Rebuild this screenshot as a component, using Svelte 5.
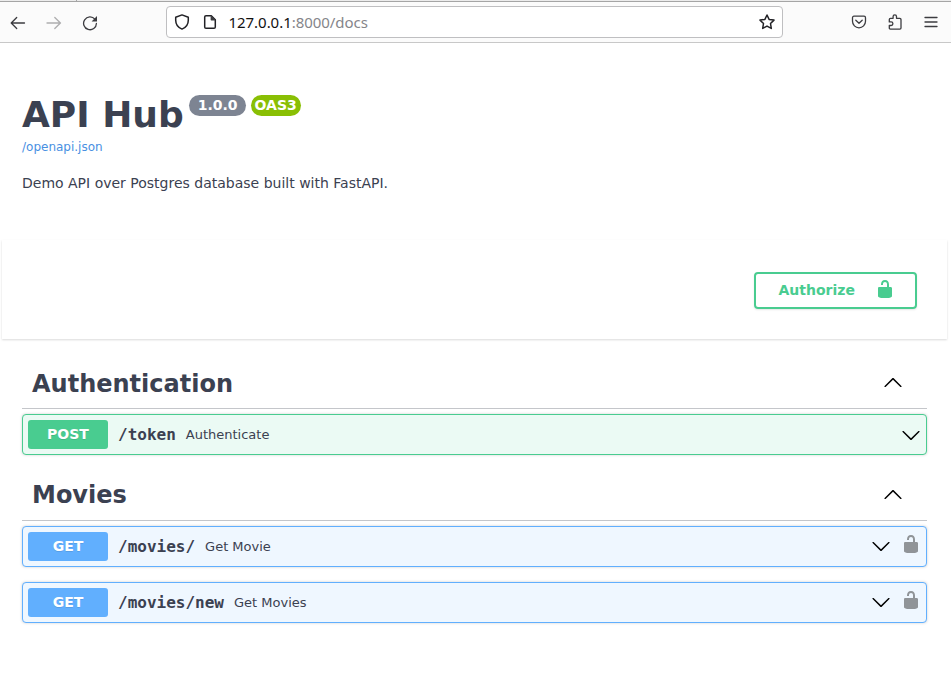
<script>
  const sections = [
    { name: 'Authentication', ops: [{ method: 'POST', path: '/token', summary: 'Authenticate', locked: false }] },
    {
      name: 'Movies',
      ops: [
        { method: 'GET', path: '/movies/', summary: 'Get Movie', locked: true },
        { method: 'GET', path: '/movies/new', summary: 'Get Movies', locked: true },
      ],
    },
  ];
</script>

{#snippet lock()}
  <svg class="lock" viewBox="0 0 20 20" width="20" height="20"><path fill="currentColor" d="M15.8 8H14V5.6C14 2.703 12.665 1 10 1 7.334 1 6 2.703 6 5.6V6h2v-.801C8 3.754 8.797 3 10 3c1.203 0 2 .754 2 2.199V8H4c-.553 0-1 .646-1 1.199V17c0 .549.428 1.139.951 1.307l1.197.387C5.672 18.861 6.55 19 7.1 19h5.8c.549 0 1.428-.139 1.951-.307l1.196-.387c.524-.167.953-.757.953-1.306V9.199C17 8.646 16.352 8 15.8 8z" /></svg>
{/snippet}

{#snippet arrow(up)}
  <svg class="arrow" class:up viewBox="0 0 20 20" width="20" height="20"><path d="M17.418 6.109c.272-.268.709-.268.979 0s.271.701 0 .969l-7.908 7.83c-.27.268-.707.268-.979 0l-7.908-7.83c-.27-.268-.27-.701 0-.969.271-.268.709-.268.979 0L10 13.25l7.418-7.141z" /></svg>
{/snippet}

<div class="page">
  <header class="toolbar">
    <nav>
      <svg viewBox="0 0 16 16" width="16" height="16"><path d="M14.5 8H1.5M6.7 2.5 1.2 8l5.5 5.5" /></svg>
      <svg class="disabled" viewBox="0 0 16 16" width="16" height="16"><path d="M1 8h13.5M8.8 2.5 14.4 8l-5.6 5.5" /></svg>
      <svg viewBox="0 0 16 16" width="16" height="16"><path d="M12.9 4.2A6.4 6.4 0 1 0 14.4 8.4" /><path class="solid" d="M15 1v5.4H9.6z" /></svg>
    </nav>
    <div class="urlbar">
      <svg viewBox="0 0 16 16" width="16" height="16"><path d="M8 .9 14.3 3.3v2.9c0 4.2-2.4 7.3-6.3 8.9-3.9-1.6-6.3-4.7-6.3-8.9V3.3z" /></svg>
      <svg class="doc" viewBox="0 0 16 16" width="16" height="16"><path d="M4 1.8h5.3l4 4v7.1c0 .8-.5 1.3-1.3 1.3H4c-.8 0-1.3-.5-1.3-1.3V3.1c0-.8.5-1.3 1.3-1.3z" /><path class="solid" d="M8.6 1.5v4c0 .6.4 1 1 1h4z" /></svg>
      <span class="url"><b>127.0.0.1</b>:8000/docs</span>
      <svg class="star" viewBox="0 0 16 16" width="16" height="16"><path d="m8 1 2.1 4.4 4.9.7-3.5 3.4.8 4.9L8 12.1l-4.3 2.3.8-4.9L1 6.1l4.9-.7z" /></svg>
    </div>
    <div class="tools">
      <svg viewBox="0 0 16 16" width="16" height="16"><path d="M3 2.2h10c.9 0 1.5.6 1.5 1.5v3.6a6.5 6.5 0 0 1-13 0V3.7c0-.9.6-1.5 1.5-1.5zM4.8 6.2 8 9.2l3.2-3" /></svg>
      <svg viewBox="0 0 16 16" width="16" height="16"><path d="M2.3 7.2V5.4c0-.7.4-1.1 1.1-1.1h2.7V2.6a1.7 1.7 0 0 1 3.4 0v1.7h3.4c.7 0 1.1.4 1.1 1.1v8.6c0 .7-.4 1.1-1.1 1.1H3.4c-.7 0-1.1-.4-1.1-1.1v-2.5h1.8a1.7 1.7 0 0 0 0-3.6H2.3z" /></svg>
      <svg viewBox="0 0 16 16" width="16" height="16"><path d="M2 3.5h12M2 8h12M2 12.5h12" /></svg>
    </div>
  </header>

  <section class="info">
    <h1>API Hub<span class="badge">1.0.0</span><span class="badge oas">OAS3</span></h1>
    <a href="/openapi.json">/openapi.json</a>
    <p>Demo API over Postgres database built with FastAPI.</p>
  </section>

  <section class="scheme">
    <button>Authorize {@render lock()}</button>
  </section>

  <main>
    {#each sections as section}
      <section class="group">
        <h2><span>{section.name}</span>{@render arrow(true)}</h2>
        {#each section.ops as op}
          <div class="op {op.method.toLowerCase()}">
            <span class="method">{op.method}</span>
            <code>{op.path}</code>
            <span class="summary">{op.summary}</span>
            {@render arrow(false)}
            {#if op.locked}{@render lock()}{/if}
          </div>
        {/each}
      </section>
    {/each}
  </main>
</div>

<style>
  :global(body) { margin: 0; background: #fff; }
  .page { height: 684px; overflow: hidden; font-family: "DejaVu Sans", sans-serif; color: #3b4151; }
  .page * { box-sizing: border-box; }
  svg { display: block; flex: none; }
  .toolbar {
    display: flex; align-items: center; height: 43px; padding: 1px 12px 0 10px;
    background:
      linear-gradient(#a5a5a5, #a5a5a5) 76px 0 / 1px 1px no-repeat,
      linear-gradient(#ececec 0 1px, #a5a5a5 1px 2px, #fbfbfb 2px);
    border-bottom: 1px solid #c8c8c8;
  }
  .toolbar svg { fill: none; stroke: #3c3c40; stroke-width: 1.3; stroke-linejoin: round; stroke-linecap: round; }
  .toolbar .solid { fill: currentColor; stroke: none; color: #3c3c40; }
  nav { display: flex; gap: 20px; width: 156px; padding-top: 2px; }
  nav .disabled { opacity: .4; }
  .urlbar {
    display: flex; align-items: center; width: 617px; height: 32px; padding: 0 7px;
    background: #fff; border: 1px solid #bfbfc1; border-radius: 4px;
  }
  .toolbar .urlbar svg { stroke: #222226; stroke-width: 1.5; }
  .urlbar .doc { margin: 0 10.5px 0 12px; }
  .url { flex: 1; font: 15px/20px "Noto Sans", sans-serif; letter-spacing: -.04px; color: #85858a; white-space: nowrap; }
  .url b { font-weight: 400; color: #111; }
  .tools { display: flex; gap: 20px; margin-left: auto; }
  .info { height: 200px; padding: 51px 22px 0; }
  h1 { display: flex; align-items: flex-start; margin: 0; font-size: 36px; line-height: 42px; font-weight: 700; }
  .badge {
    height: 21px; margin: 1px 0 0 5px; padding: 0 8px 0 9px; border-radius: 11px; background: #7d8492;
    color: #fff; font-size: 14px; line-height: 21px;
  }
  .badge.oas { padding: 0 4px; background: #89bf04; }
  a { display: block; margin-top: 3px; font-size: 12px; line-height: 16px; color: #4990e2; text-decoration: none; }
  p { margin: 19px 0 0; font-size: 14px; line-height: 18px; }
  .scheme {
    display: flex; justify-content: flex-end; height: 99px; margin: -3px 4px 0 2px; padding: 32px 30px 0 0;
    background: #fff; box-shadow: 0 1px 2px rgba(0, 0, 0, .15);
  }
  button {
    display: flex; align-items: center; justify-content: space-between; width: 163px; height: 37px;
    padding: 0 20px 2px 22.5px; border: 2px solid #49cc90; border-radius: 4px; background: transparent;
    box-shadow: 0 1px 2px rgba(0, 0, 0, .1); color: #49cc90; font: 700 14px/18px "DejaVu Sans", sans-serif;
  }
  button .lock { margin-top: -2px; }
  main { padding: 18px 24px 0 22px; }
  .group { margin-bottom: 14px; }
  h2 {
    display: flex; align-items: center; justify-content: space-between; height: 52px; margin: 0 0 5px;
    padding: 0 24px 0 10px; border-bottom: 1px solid rgba(59, 65, 81, .3); font-size: 24px; line-height: 32px;
  }
  .group:first-child h2 span { padding-top: 2px; }
  .arrow { fill: #000; }
  .arrow.up { transform: rotate(180deg); }
  .op {
    display: flex; align-items: center; height: 41px; margin-bottom: 15px; padding: 0 5px;
    border: 1px solid #61affe; border-radius: 4px; background: #eff7ff; box-shadow: 0 0 3px rgba(0, 0, 0, .19);
  }
  .op:last-child { margin-bottom: 0; }
  .op.post { border-color: #49cc90; background: #ebfaf4; }
  .method {
    width: 80px; height: 29px; border-radius: 3px; background: #61affe; color: #fff; text-align: center;
    font-size: 14px; line-height: 29px; font-weight: 700; text-shadow: 0 1px 0 rgba(0, 0, 0, .1);
  }
  .post .method { background: #49cc90; }
  code { margin: 0 10px; font: 700 16px/20px "DejaVu Sans Mono", monospace; }
  .summary { flex: 1; font-size: 13px; }
  .get .arrow { margin-top: -1px; }
  .op .lock { margin: -5px 0 0 10px; color: #909498; }
</style>
